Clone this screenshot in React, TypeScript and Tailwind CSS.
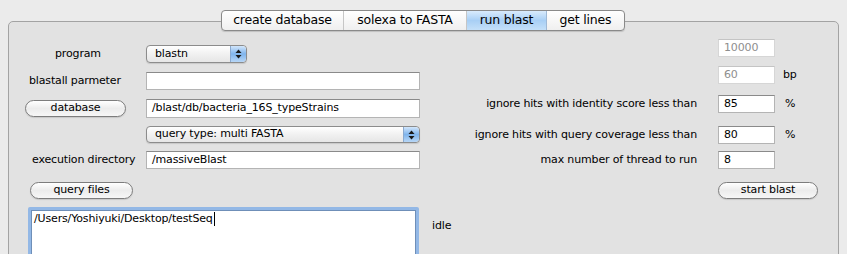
import React from "react";

const font = { fontFamily: '"DejaVu Sans", "Noto Sans", sans-serif' };

function PillButton({ label, w }: { label: string; w: string }) {
  return (
    <div
      className={`${w} h-[17px] rounded-full border border-[#7d7d7d] bg-gradient-to-b from-[#ffffff] via-[#ececec] to-[#f7f7f7] flex items-center justify-center text-[11px] tracking-[-0.15px] text-black shadow-[0_1px_1px_rgba(0,0,0,0.12)]`}
    >
      {label}
    </div>
  );
}

function PopupArrows() {
  return (
    <div className="w-[16px] h-full rounded-r-[4px] bg-gradient-to-b from-[#d2e6fb] via-[#7fb4ec] to-[#b7d6f6] border-l border-[#8aa9cf] flex items-center justify-center">
      <svg width="7" height="10" viewBox="0 0 7 10">
        <path d="M3.5 0.5 L6.5 4 L0.5 4 Z" fill="#1a1a1a" />
        <path d="M0.5 6 L6.5 6 L3.5 9.5 Z" fill="#1a1a1a" />
      </svg>
    </div>
  );
}

function Popup({ label, w, h }: { label: string; w: string; h: string }) {
  return (
    <div
      className={`${w} ${h} rounded-[4px] border border-[#8c8c8c] bg-gradient-to-b from-[#ffffff] via-[#f1f1f1] to-[#e6e6e6] flex items-stretch shadow-[0_1px_1px_rgba(0,0,0,0.12)]`}
    >
      <div className="flex-1 flex items-center pl-[8px] text-[11px] tracking-[-0.15px] text-black">
        {label}
      </div>
      <PopupArrows />
    </div>
  );
}

function Field({
  value,
  w,
  h,
  disabled,
}: {
  value: string;
  w: string;
  h: string;
  disabled?: boolean;
}) {
  return (
    <div
      className={`${w} ${h} bg-white border flex items-center pl-[5px] text-[11px] tracking-[-0.15px] ${
        disabled
          ? "border-[#d6d6d6] border-t-[#c4c4c4] text-[#8e8e8e]"
          : "border-[#b4b4b4] border-t-[#8a8a8a] text-black"
      }`}
    >
      {value}
    </div>
  );
}

function RightRow({
  label,
  value,
  unit,
  unitPad,
  disabled,
  mt,
}: {
  label: string;
  value: string;
  unit?: string;
  unitPad?: string;
  disabled?: boolean;
  mt: string;
}) {
  return (
    <div className={`flex items-center h-[18px] ${mt}`}>
      <div className="flex-1 text-right text-[11px] tracking-[-0.15px] text-black whitespace-nowrap">
        {label}
      </div>
      <div className="ml-[21px]">
        <Field value={value} w="w-[57px]" h="h-[18px]" disabled={disabled} />
      </div>
      <div className={`w-[62px] ${unitPad ?? ""} text-[11px] tracking-[-0.15px] text-black`}>
        {unit}
      </div>
    </div>
  );
}

export default function App() {
  return (
    <div
      className="relative w-[847px] h-[254px] overflow-hidden bg-[#ebebeb] pl-[8px] pt-[21px]"
      style={font}
    >
      {/* Panel */}
      <div className="w-[831px] h-[260px] rounded-[5px] border border-[#a3a3a3] bg-[#e2e2e2] flex">
        {/* Left column */}
        <div className="w-[451px] flex flex-col pt-[23px]">
          <div className="flex items-center h-[18px]">
            <div className="w-[137px] pl-[46px] text-[11px] tracking-[-0.15px]">program</div>
            <Popup label="blastn" w="w-[101px]" h="h-[18px]" />
          </div>
          <div className="flex items-center h-[18px] mt-[9px]">
            <div className="w-[137px] pl-[20px] text-[11px] tracking-[-0.15px] whitespace-nowrap">
              blastall parmeter
            </div>
            <Field value="" w="w-[274px]" h="h-[18px]" />
          </div>
          <div className="flex items-center h-[19px] mt-[9px]">
            <div className="w-[137px] pl-[16px]">
              <PillButton label="database" w="w-[101px]" />
            </div>
            <Field value="/blast/db/bacteria_16S_typeStrains" w="w-[274px]" h="h-[19px]" />
          </div>
          <div className="flex items-center h-[17px] mt-[8px]">
            <div className="w-[137px]" />
            <Popup label="query type: multi FASTA" w="w-[274px]" h="h-[17px]" />
          </div>
          <div className="flex items-center h-[18px] mt-[8px]">
            <div className="w-[137px] pl-[23px] text-[11px] tracking-[-0.15px] whitespace-nowrap">
              execution directory
            </div>
            <Field value="/massiveBlast" w="w-[274px]" h="h-[18px]" />
          </div>
          <div className="flex items-center h-[17px] mt-[13px] pl-[21px]">
            <PillButton label="query files" w="w-[103px]" />
          </div>
          <div className="flex items-start mt-[8px] pl-[19px]">
            <div className="w-[391px] h-[60px] rounded-[2px] border-[3px] border-[#93b8e6] bg-white">
              <div className="h-full border border-[#6f8fb8] pl-[2px] pt-[0px] text-[11px] tracking-[-0.15px] text-black flex items-start">
                <span className="leading-[15px]">/Users/Yoshiyuki/Desktop/testSeq</span>
                <span className="inline-block w-[1px] h-[14px] bg-black ml-[1px] mt-[1px]" />
              </div>
            </div>
            <div className="ml-[13px] mt-[11px] text-[11px] tracking-[-0.15px] text-black">idle</div>
          </div>
        </div>

        {/* Right column */}
        <div className="w-[377px] flex flex-col pt-[17px]">
          <RightRow label="" value="10000" disabled mt="" />
          <RightRow label="" value="60" unit="bp" unitPad="pl-[8px]" disabled mt="mt-[9px]" />
          <RightRow
            label="ignore hits with identity score less than"
            value="85"
            unit="%"
            unitPad="pl-[10px]"
            mt="mt-[11px]"
          />
          <RightRow
            label="ignore hits with query coverage less than"
            value="80"
            unit="%"
            unitPad="pl-[10px]"
            mt="mt-[13px]"
          />
          <RightRow label="max number of thread to run" value="8" mt="mt-[7px]" />
          <div className="flex justify-end mt-[13px] pr-[19px]">
            <PillButton label="start blast" w="w-[100px]" />
          </div>
        </div>
      </div>

      {/* Tabs overlay the panel's top border */}
      <div className="absolute top-[10px] left-[221px] h-[21px] flex rounded-[4px] border border-[#8a8a8a] bg-gradient-to-b from-[#ffffff] to-[#efefef] overflow-hidden shadow-[0_1px_1px_rgba(0,0,0,0.15)] text-[12.5px] tracking-[-0.2px] text-black">
        <div className="w-[122px] flex items-center justify-center border-r border-[#c6c6c6]">
          create database
        </div>
        <div className="w-[123px] flex items-center justify-center border-r border-[#c6c6c6]">
          solexa to FASTA
        </div>
        <div className="w-[80px] flex items-center justify-center bg-gradient-to-b from-[#d9ebfc] via-[#a8cff5] to-[#c4e0f9] border-r border-[#9fb9d6]">
          run blast
        </div>
        <div className="w-[77px] flex items-center justify-center">get lines</div>
      </div>
    </div>
  );
}
